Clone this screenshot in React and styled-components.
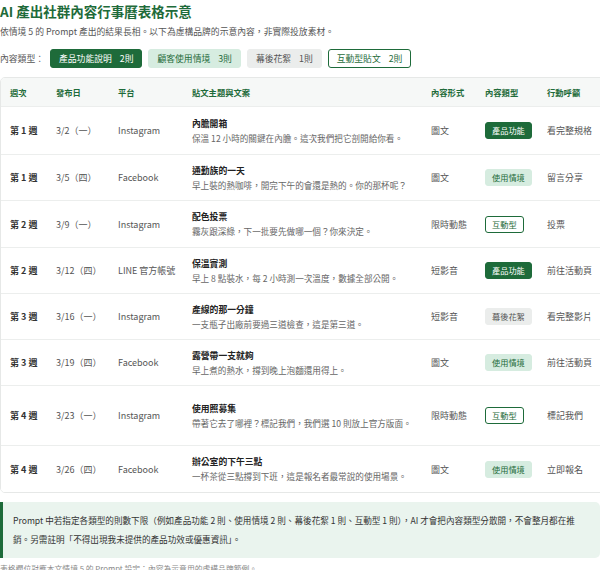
import React from 'react';
import styled, { createGlobalStyle } from 'styled-components';

const Global = createGlobalStyle`
  body { margin: 0; font-family: "Noto Sans CJK TC", "Noto Sans", sans-serif; color: #333; background: #fff; overflow: hidden; }
`;

const Page = styled.div`
  width: 610px;
  padding-top: 2px;
`;

const Title = styled.h1`
  margin: 0; font-size: 13.5px; line-height: 18px; color: #1e6b3a; font-weight: 700;
`;

const Sub = styled.p`
  margin: 5px 0 0; font-size: 8.8px; color: #555; line-height: 14px;
`;

const ChipRow = styled.div`
  display: flex; align-items: center; gap: 6px; margin-top: 10px; font-size: 8.8px; color: #555;
`;

const chipStyles = {
  solid: 'background:#1e6b3a;color:#fff;border:1px solid #1e6b3a;',
  soft: 'background:#d6ece0;color:#1e6b3a;border:1px solid #d6ece0;',
  grey: 'background:#ebedec;color:#555;border:1px solid #ebedec;',
  outline: 'background:#fff;color:#1e6b3a;border:1px solid #1e6b3a;',
};

const Chip = styled.span`
  ${p => chipStyles[p.$kind]}
  border-radius: 3px; height: 17px; padding: 0 8px; display: inline-flex; align-items: center; font-size: 8.8px; word-spacing: 6px;
`;

const Table = styled.div`
  margin-top: 9px; border: 1px solid #e6e8e7; border-radius: 5px; overflow: hidden;
`;

const Row = styled.div`
  display: grid; grid-template-columns: 46px 62px 74px 239px 54px 62px 70px;
  align-items: center; height: ${p => p.$h}px; padding-left: 9px;
  border-top: ${p => (p.$head ? 'none' : '1px solid #eceeed')};
  background: ${p => (p.$head ? '#f6f8f7' : '#fff')};
  font-size: 9px; box-sizing: border-box;
`;

const Head = styled.div`
  font-size: 8.3px; font-weight: 700; color: #1e6b3a;
`;

const Week = styled.div` font-weight: 700; color: #333; `;
const Cell = styled.div` color: #555; `;
const Topic = styled.div` font-weight: 700; color: #222; font-size: 8.8px; line-height: 14px; `;
const Copy = styled.div` color: #666; font-size: 8.6px; line-height: 14px; padding-right: 10px; `;

const Tag = styled.span`
  ${p => chipStyles[p.$kind]}
  display: inline-block; border-radius: 3px; padding: 2px 6px; font-size: 8.2px; line-height: 11px;
`;

const Note = styled.div`
  margin-top: 9px; width: 600px; box-sizing: border-box; background: #eaf4ee; border-left: 3px solid #1e6b3a;
  border-radius: 0 5px 5px 0; padding: 9px 10px; font-size: 8.6px; line-height: 19px; color: #333;
`;

const Foot = styled.div`
  margin-top: 5px; font-size: 7.8px; color: #888;
`;

const rows = [
  ['第 1 週', '3/2（一）', 'Instagram', '內膽開箱', '保溫 12 小時的關鍵在內膽。這次我們把它剖開給你看。', '圖文', 'solid', '產品功能', '看完整規格', 48],
  ['第 1 週', '3/5（四）', 'Facebook', '通勤族的一天', '早上裝的熱咖啡，開完下午的會還是熱的。你的那杯呢？', '圖文', 'soft', '使用情境', '留言分享', 46],
  ['第 2 週', '3/9（一）', 'Instagram', '配色投票', '霧灰跟深綠，下一批要先做哪一個？你來決定。', '限時動態', 'outline', '互動型', '投票', 47],
  ['第 2 週', '3/12（四）', 'LINE 官方帳號', '保溫實測', '早上 8 點裝水，每 2 小時測一次溫度，數據全部公開。', '短影音', 'solid', '產品功能', '前往活動頁', 46],
  ['第 3 週', '3/16（一）', 'Instagram', '產線的那一分鐘', '一支瓶子出廠前要過三道檢查，這是第三道。', '短影音', 'grey', '幕後花絮', '看完整影片', 46],
  ['第 3 週', '3/19（四）', 'Facebook', '露營帶一支就夠', '早上煮的熱水，撐到晚上泡麵還用得上。', '圖文', 'soft', '使用情境', '前往活動頁', 46],
  ['第 4 週', '3/23（一）', 'Instagram', '使用照募集', '帶著它去了哪裡？標記我們，我們選 10 則放上官方版面。', '限時動態', 'outline', '互動型', '標記我們', 60],
  ['第 4 週', '3/26（四）', 'Facebook', '辦公室的下午三點', '一杯茶從三點撐到下班，這是報名者最常說的使用場景。', '圖文', 'soft', '使用情境', '立即報名', 47],
];

export default function App() {
  return (
    <Page>
      <Global />
      <Title>AI 產出社群內容行事曆表格示意</Title>
      <Sub>依情境 5 的 Prompt 產出的結果長相。以下為虛構品牌的示意內容，非實際投放素材。</Sub>
      <ChipRow>
        內容類型：
        <Chip $kind="solid">產品功能說明 2則</Chip>
        <Chip $kind="soft">顧客使用情境 3則</Chip>
        <Chip $kind="grey">幕後花絮 1則</Chip>
        <Chip $kind="outline">互動型貼文 2則</Chip>
      </ChipRow>
      <Table>
        <Row $head $h={28}>
          {['週次', '發布日', '平台', '貼文主題與文案', '內容形式', '內容類型', '行動呼籲'].map(h => <Head key={h}>{h}</Head>)}
        </Row>
        {rows.map((r, i) => (
          <Row key={i} $h={r[9]}>
            <Week>{r[0]}</Week>
            <Cell>{r[1]}</Cell>
            <Cell>{r[2]}</Cell>
            <div><Topic>{r[3]}</Topic><Copy>{r[4]}</Copy></div>
            <Cell>{r[5]}</Cell>
            <div><Tag $kind={r[6]}>{r[7]}</Tag></div>
            <Cell>{r[8]}</Cell>
          </Row>
        ))}
      </Table>
      <Note>Prompt 中若指定各類型的則數下限（例如產品功能 2 則、使用情境 2 則、幕後花絮 1 則、互動型 1 則），AI 才會把內容類型分散開，不會整月都在推銷。另需註明「不得出現我未提供的產品功效或優惠資訊」。</Note>
      <Foot>表格欄位對應本文情境 5 的 Prompt 設定；內容為示意用的虛構品牌範例。</Foot>
    </Page>
  );
}
